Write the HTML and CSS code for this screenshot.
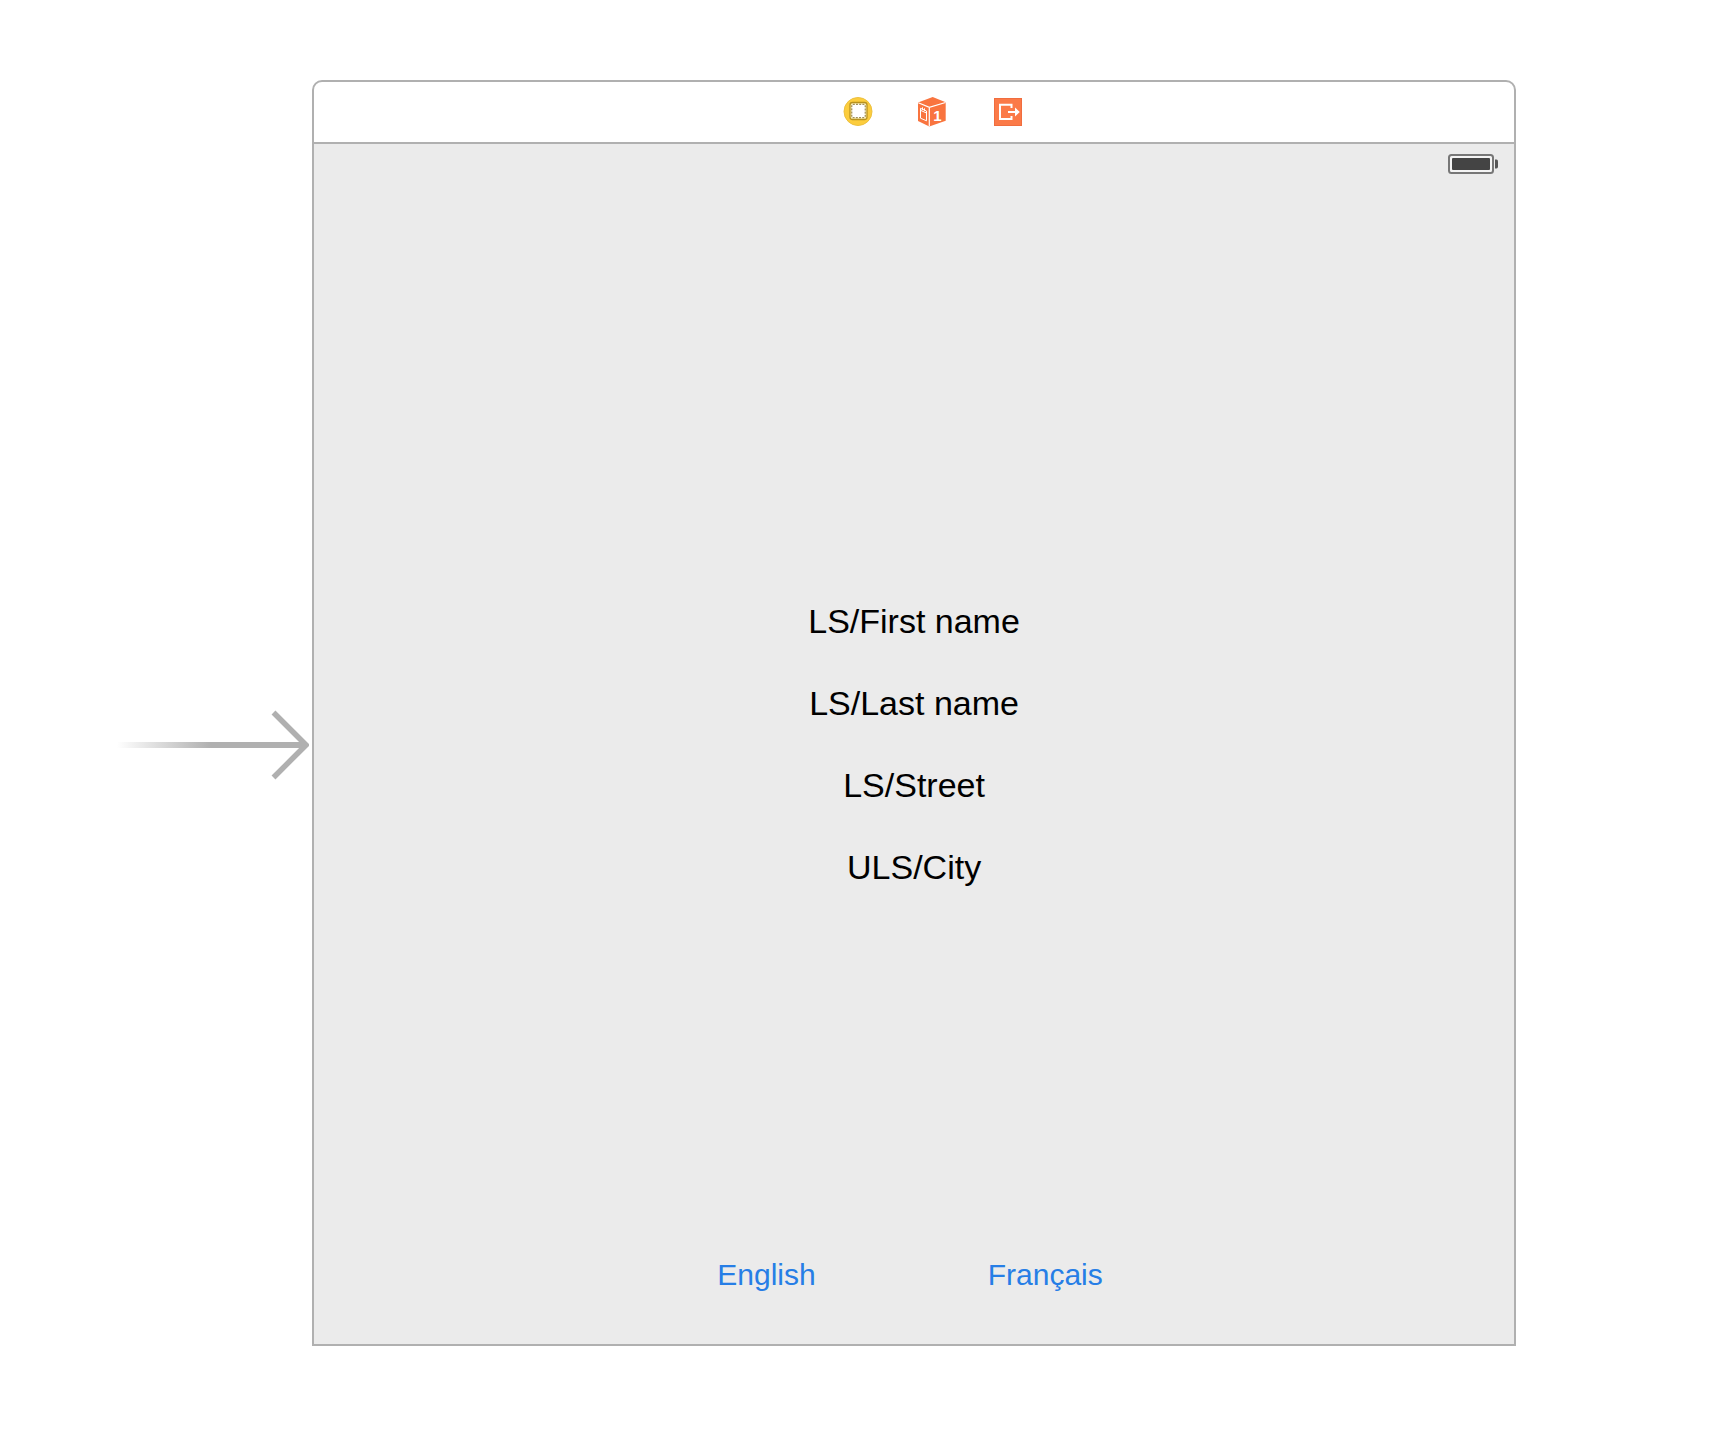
FILE: index.html
```html
<!DOCTYPE html>
<html lang="en">
<head>
<meta charset="utf-8">
<title>Storyboard</title>
<link rel="stylesheet" href="styles.css">
</head>
<body>
<main class="canvas">
  <div class="entry">
    <svg class="entry-arrow" width="192" height="72" viewBox="0 0 192 72" aria-hidden="true">
      <defs>
        <linearGradient id="fade" x1="0" x2="1" y1="0" y2="0">
          <stop offset="0" stop-color="#b0b0b0" stop-opacity="0"/>
          <stop offset="0.5" stop-color="#b0b0b0"/>
        </linearGradient>
      </defs>
      <rect x="0" y="33" width="188" height="6" fill="url(#fade)"/>
      <path d="M156.500 3.500 189 36 156.500 68.500" fill="none" stroke="#b0b0b0" stroke-width="5.500"/>
    </svg>
  </div>
  <section class="scene">
    <header class="dock">
      <svg class="dock-icon" viewBox="0 0 30 30" role="img" aria-label="View Controller">
        <circle cx="15" cy="14.500" r="14" fill="#fccd3d" stroke="#ecc041"/>
        <rect x="7" y="5.500" width="17" height="17" rx="2.500" fill="#fdf0b8" stroke="#b8921f" stroke-width="1.300"/>
        <rect x="8.800" y="7.300" width="13.400" height="13.400" rx="1" fill="#fff" stroke="#8a7638" stroke-dasharray="2 1.200"/>
      </svg>
      <svg class="dock-icon" viewBox="0 0 30 30" role="img" aria-label="First Responder">
        <path d="M14.700 0 27.700 5.300V23.700L11.300 29.600 0 24V5.500z" fill="#f9743f"/>
        <path d="M0.300 5.700 11.300 10.300 27.500 5.500M11.300 10.300V29.300" fill="none" stroke="#fff" stroke-width="1.200"/>
        <path d="M2.500 11.300 8.500 14V23.800L2.500 21.200zM2.500 13.300 8.500 16M4.500 10.300v2.500M6.500 11.300v2.500" fill="none" stroke="#fff" stroke-width="1"/>
        <text x="19.500" y="23.500" text-anchor="middle" class="dock-digit">1</text>
      </svg>
      <svg class="dock-icon" viewBox="0 0 30 30" role="img" aria-label="Exit">
        <rect x="1.500" y="1.500" width="27" height="27" fill="#fb7a48" stroke="#f06d3f"/>
        <path d="M18.500 11V7.700H7V22H18.500V19" fill="none" stroke="#fff" stroke-width="2"/>
        <path d="M15 14h7v-3.500l4.800 4.500-4.800 4.500V16h-7z" fill="#fff"/>
      </svg>
    </header>
    <div class="screen">
      <div class="status">
        <svg width="50" height="20" viewBox="0 0 50 20" role="img" aria-label="Battery full">
          <rect x="1" y="1" width="44" height="18" rx="2.500" fill="#f4f4f4" stroke="#777" stroke-width="2"/>
          <rect x="4" y="4" width="38" height="12" rx="1" fill="#444"/>
          <path d="M47 5.500h1.500q1.500 0 1.500 2v5q0 2-1.500 2H47z" fill="#555"/>
        </svg>
      </div>
      <div class="labels">
        <div>LS/First name</div>
        <div>LS/Last name</div>
        <div>LS/Street</div>
        <div>ULS/City</div>
      </div>
      <div class="languages">
        <button type="button">English</button>
        <button type="button" lang="fr">Français</button>
      </div>
    </div>
  </section>
</main>
</body>
</html>
```
FILE: styles.css
```css
* {
  box-sizing: border-box;
}

body {
  margin: 0;
  background: #fff;
  color: #000;
  font-family: "Liberation Sans", Arial, sans-serif;
}

.canvas {
  display: grid;
  grid-template-columns: 18% minmax(0, 1fr) 218px;
  padding: 80px 0 108px;
}

.entry {
  display: flex;
  align-items: center;
  justify-content: flex-end;
  padding: 64px 3px 0 0;
}

.scene {
  border: 2px solid #b0b0b0;
  border-radius: 10px 10px 0 0;
  overflow: hidden;
}

.dock {
  display: flex;
  align-items: center;
  justify-content: center;
  gap: 45px;
  height: 62px;
  padding-left: 38px;
  border-bottom: 2px solid #b0b0b0;
}

.dock-icon {
  width: 30px;
  height: 30px;
}

.dock-digit {
  fill: #fff;
  font-size: 15px;
  font-weight: 700;
}

.screen {
  background: #ebebeb;
  padding-bottom: 51px;
}

.status {
  display: flex;
  align-items: center;
  justify-content: flex-end;
  height: 40px;
  padding-right: 16px;
}

.labels {
  display: flex;
  flex-direction: column;
  align-items: center;
  gap: 40px;
  padding: 416px 0 369px;
  font-size: 34px;
  line-height: 42px;
}

.languages {
  display: flex;
  justify-content: center;
  gap: 172px;
  padding-right: 8px;
}

.languages button {
  padding: 0;
  border: 0;
  background: none;
  color: #267ee6;
  font-family: inherit;
  font-size: 30px;
  line-height: 36px;
  cursor: pointer;
}
```
